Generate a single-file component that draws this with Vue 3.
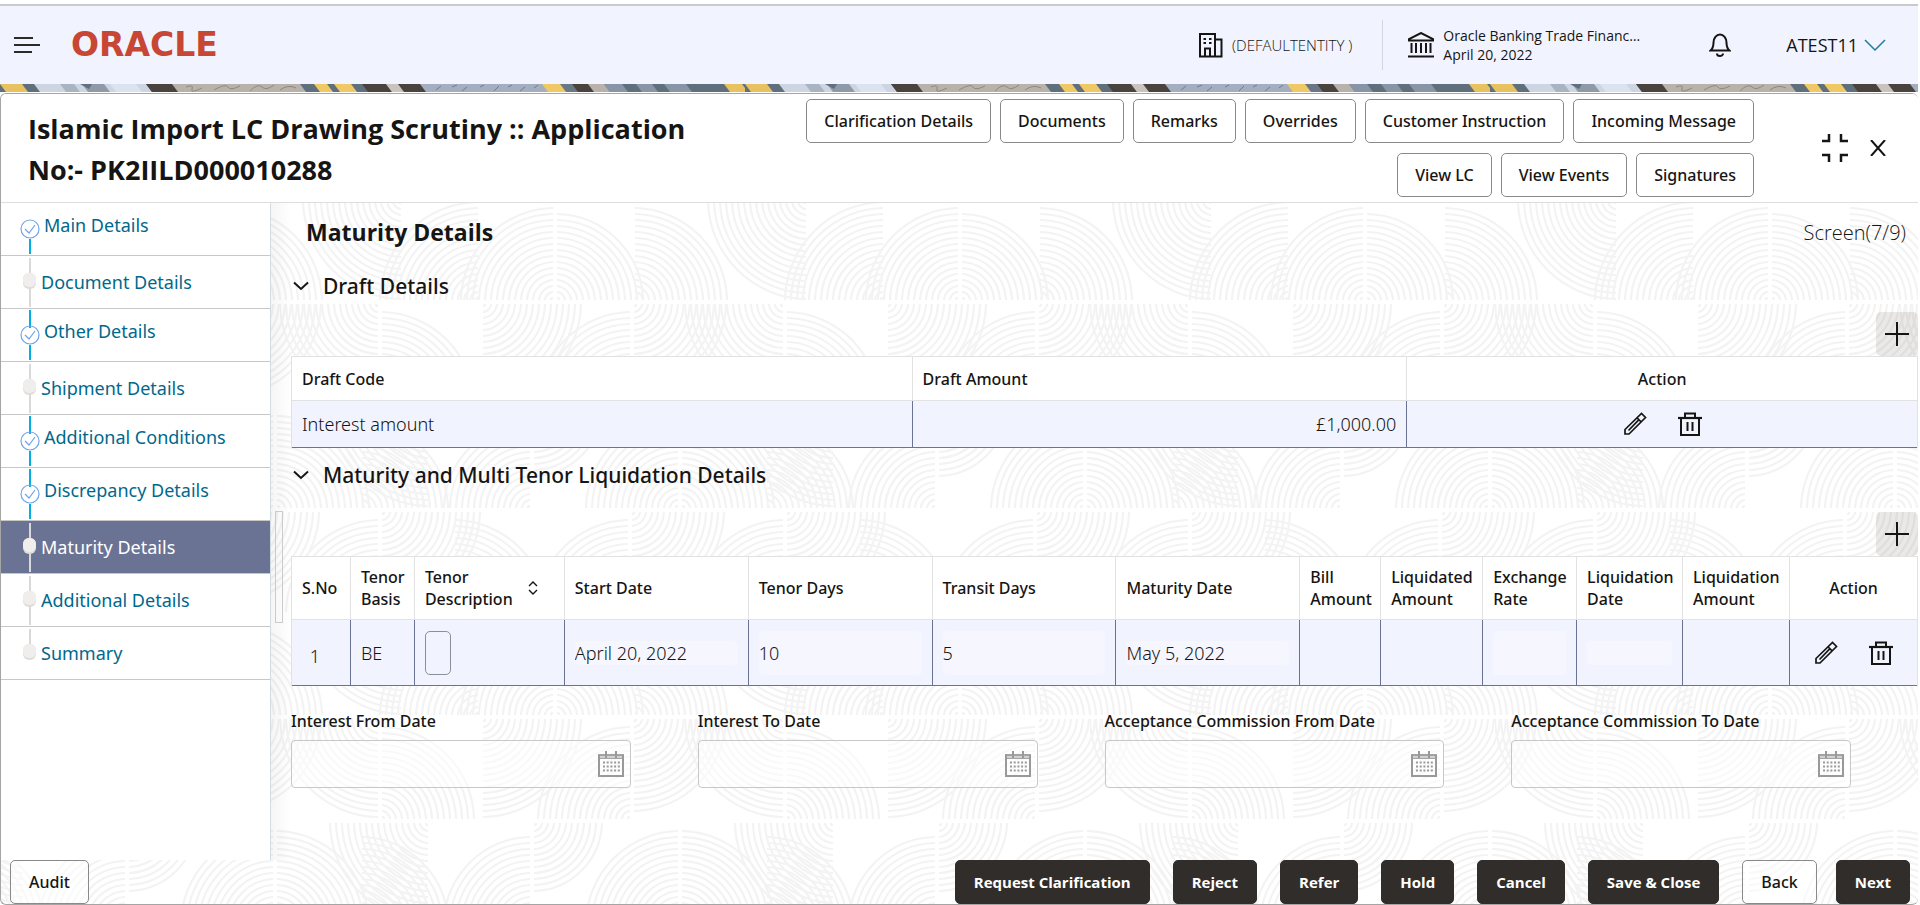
<script setup>
const topActions = [
  ['Clarification Details', 'Documents', 'Remarks', 'Overrides', 'Customer Instruction', 'Incoming Message'],
  ['View LC', 'View Events', 'Signatures'],
]

const steps = [
  { name: 'Main Details', done: true },
  { name: 'Document Details' },
  { name: 'Other Details', done: true },
  { name: 'Shipment Details' },
  { name: 'Additional Conditions', done: true },
  { name: 'Discrepancy Details', done: true },
  { name: 'Maturity Details', current: true },
  { name: 'Additional Details' },
  { name: 'Summary' },
]

const draftColumns = [621, 495, 510]
const tenorColumns = [59, 64, 150, 184, 184, 184, 184, 81, 102, 94, 106, 107, 127]
const share = (list, i) => (list[i] / list.reduce((a, b) => a + b, 0)) * 100 + '%'

const dateFields = [
  { id: 'interest-from', label: 'Interest From Date' },
  { id: 'interest-to', label: 'Interest To Date' },
  { id: 'commission-from', label: 'Acceptance Commission From Date' },
  { id: 'commission-to', label: 'Acceptance Commission To Date' },
]

const footerActions = ['Request Clarification', 'Reject', 'Refer', 'Hold', 'Cancel', 'Save & Close']

// Quarter fans of the backdrop: centre x, centre y, quadrant, outer radius
const fans = [
  [100, 0, 'bl', 100], [100, 104, 'tr', 98], [201, 0, 'br', 100], [352, 104, 'tl', 96], [352, 0, 'br', 98],
  [150, 104, 'bl', 100], [252, 208, 'tl', 90], [400, 208, 'tl', 98], [400, 208, 'tr', 98], [80, 208, 'tr', 90], [252, 104, 'br', 70],
  [100, 312, 'tl', 98], [100, 208, 'br', 100], [173, 312, 'tr', 94], [350, 312, 'tl', 98], [350, 208, 'br', 96],
  [200, 415, 'tl', 100], [275, 415, 'tl', 96], [275, 415, 'tr', 92], [353, 415, 'tr', 98], [123, 312, 'bl', 100],
]
const arc = ([cx, cy, quad], r) => {
  const sx = quad[1] === 'l' ? -1 : 1
  const sy = quad[0] === 't' ? -1 : 1
  return `M${cx + sx * r} ${cy + sy * 2}V${cy + sy * 3}A${r} ${r} 0 0 ${sx * sy > 0 ? 1 : 0} ${cx + sx * 3} ${cy + sy * r}H${cx + sx * 2}`
}
const fanPaths = fans.flatMap((f) => {
  const out = []
  for (let r = 4; r <= f[3]; r += 6) {
    const d = arc(f, r)
    out.push({ d, shift: 0 })
    if (f[0] + f[3] > 405) out.push({ d, shift: -405 })
    if (f[0] - f[3] < 0) out.push({ d, shift: 405 })
  }
  return out
})

// Banner mosaic: left edge, width, colour
const mosaic = [
  [0, 24, '#e9c260'], [22, 20, '#5f6f7b'], [34, 112, '#cdd5e3'], [60, 14, '#a9b4c2'], [82, 22, '#8f9aa8'], [110, 26, '#dbe2f0'],
  [146, 30, '#4a423d'], [172, 136, '#b9b2ab'], [300, 62, '#5f6f7b'], [314, 13, '#f0c964'], [334, 17, '#f0c964'],
  [362, 24, '#4a423d'], [386, 14, '#c9c4be'], [398, 24, '#4a423d'], [420, 126, '#a3afc0'], [542, 20, '#f0c964'],
  [560, 14, '#6a7885'], [572, 18, '#4a423d'], [588, 16, '#b9b2ab'], [604, 84, '#8795a6'], [622, 14, '#5f6f7b'], [652, 12, '#5f6f7b'],
  [686, 40, '#5f6f7b'], [724, 18, '#e9c260'],
]
</script>

<template>
  <div class="page">
    <svg class="defs" width="0" height="0" aria-hidden="true">
      <defs>
        <symbol id="pencil" viewBox="0 0 24 24">
          <path d="M2 22v-4.500L18.500 1.500l4 4L6 22zM14.200 6l3.700 3.700M5.500 18.500L15.500 8.200" fill="none" stroke="#161513" stroke-width="1.700" />
        </symbol>
        <symbol id="trash" viewBox="0 0 24 24">
          <path d="M0 6h24" stroke="#161513" stroke-width="2.200" />
          <path d="M7 5.500V1.500h10v4M3 6v17h18V6M9.500 10v9M14.500 10v9" fill="none" stroke="#161513" stroke-width="2" />
        </symbol>
        <symbol id="calendar" viewBox="0 0 26 26">
          <path d="M0 3h26v5H0z" fill="#a3a3a3" />
          <path d="M1 4v21h24V4" fill="none" stroke="#999" stroke-width="2" />
          <path d="M2 6h22" stroke="#fff" stroke-width="1" />
          <path d="M8 0v7M18 0v7" stroke="#999" stroke-width="2" />
          <path d="M5 11.500h17M5 15.500h17M5 19.500h17" stroke="#999" stroke-width="2" stroke-dasharray="2 1.700" />
        </symbol>
        <symbol id="chevron" viewBox="0 0 16 10">
          <path d="M1 1.500l7 6.500 7-6.500" fill="none" stroke="#161513" stroke-width="2" />
        </symbol>
      </defs>
    </svg>

    <header class="topbar">
      <button class="plain menu" aria-label="Menu">
        <svg width="26" height="16" viewBox="0 0 26 16"><path d="M0 1h19M0 8h26M0 15h18" stroke="#2b2a29" stroke-width="2" /></svg>
      </button>
      <span class="brand">ORACLE</span>
      <div class="entity">
        <svg width="24" height="25" viewBox="0 0 24 25">
          <path d="M1 1h15v22.500H1zM16 6.500h6.500v17H16" fill="none" stroke="#161513" stroke-width="2" />
          <path d="M4.500 6h2.500M10 6h2.500M4.500 10h2.500M10 10h2.500" stroke="#161513" stroke-width="2.200" />
          <path d="M6 23v-7.500h5V23" fill="none" stroke="#161513" stroke-width="2" />
        </svg>
        <span>(DEFAULTENTITY )</span>
      </div>
      <div class="branch">
        <svg width="26" height="26" viewBox="0 0 26 26">
          <path d="M1 8.500v-1.500L13 1l12 6v1.500z" fill="none" stroke="#161513" stroke-width="2" />
          <path d="M3.500 11v10M8 11v10M13 11v10M18 11v10M22.500 11v10" stroke="#161513" stroke-width="2" />
          <path d="M0 24.500h26" stroke="#161513" stroke-width="2" />
        </svg>
        <div class="branch-text">
          <div class="branch-name">Oracle Banking Trade Financ…</div>
          <div>April 20, 2022</div>
        </div>
      </div>
      <button class="plain bell" aria-label="Notifications">
        <svg width="22" height="24" viewBox="0 0 22 24">
          <path d="M1.500 17.500c2.500-2 3-4 3-8a6.500 8 0 0 1 13 0c0 4 .5 6 3 8z" fill="none" stroke="#161513" stroke-width="2" />
          <path d="M8 20.500a3 2.500 0 0 0 6 0" fill="none" stroke="#161513" stroke-width="2" />
        </svg>
      </button>
      <button class="plain user">
        ATEST11
        <svg width="22" height="12" viewBox="0 0 22 12"><path d="M1 1l10 10L21 1" fill="none" stroke="#227e9e" stroke-width="1.500" /></svg>
      </button>
    </header>

    <svg class="mosaic" width="100%" height="8" aria-hidden="true">
      <defs>
        <pattern id="mosaic" width="745" height="8" patternUnits="userSpaceOnUse">
          <rect width="745" height="8" fill="#5f6f7b" />
          <path v-for="(m, i) in mosaic" :key="i" :d="`M${m[0]} 0h${m[1]}l6 8h-${m[1]}z`" :fill="m[2]" />
          <path d="M80 0h12l-3 5z" fill="#5f6f7b" />
          <path d="M186 3q8-3 6 2t10-1M214 6q12-7 14-3t12-1M250 7q8-8 12-4t12-2M280 6q8-6 16-2" fill="none" stroke="#8d8781" />
          <path d="M436 6l5-4M452 3l5-2M462 7l5-4M480 3l4-2M494 7l5-5M508 3l4-2M520 7l5-4M534 4l4-3" stroke="#6f7c8e" />
        </pattern>
      </defs>
      <rect width="100%" height="8" fill="url(#mosaic)" />
    </svg>

    <main class="panel">
      <svg class="backdrop" width="100%" height="100%" aria-hidden="true">
        <defs>
          <pattern id="fans" x="279" y="208" width="405" height="415" patternUnits="userSpaceOnUse">
            <path v-for="(p, i) in fanPaths" :key="i" :d="p.d" :transform="`translate(${p.shift} 0)`" fill="none" stroke="#f3f3f3" stroke-width="2.200" />
          </pattern>
        </defs>
        <rect width="100%" height="100%" fill="url(#fans)" />
      </svg>

      <div class="titlebar">
        <h1>Islamic Import LC Drawing Scrutiny :: Application No:- PK2IILD000010288</h1>
        <div class="actions">
          <div v-for="(row, i) in topActions" :key="i" class="action-row">
            <button v-for="a in row" :key="a" class="btn">{{ a }}</button>
          </div>
        </div>
        <div class="window-tools">
          <button class="plain" aria-label="Collapse">
            <svg width="26" height="28" viewBox="0 0 26 28"><path d="M0 7h7V0M26 7h-7V0M0 21h7v7M26 21h-7v7" fill="none" stroke="#161513" stroke-width="2.500" /></svg>
          </button>
          <button class="plain" aria-label="Close">
            <svg width="16" height="16" viewBox="0 0 16 16"><path d="M1 0l14 16M15 0L1 16" stroke="#161513" stroke-width="2" /></svg>
          </button>
        </div>
      </div>

      <div class="body">
        <nav class="steps">
          <a v-for="(s, i) in steps" :key="s.name" href="#" class="step" :class="{ done: s.done, current: s.current }">
            <svg width="20" height="52" viewBox="0 0 20 52">
              <template v-if="s.done">
                <path v-if="i > 0" d="M10 1v18" stroke="#00afe3" stroke-width="2" />
                <path d="M10 36v15" stroke="#00afe3" stroke-width="2" />
                <circle cx="10" cy="26" r="9" fill="none" stroke="#6ea6e6" stroke-width="1.200" />
                <path d="M5 26l4 4 6-8" fill="none" stroke="#6ea6e6" stroke-width="1.200" />
              </template>
              <template v-else>
                <path :d="i < steps.length - 1 ? 'M10 2v49' : 'M10 2v22'" stroke="#d9d9dc" stroke-width="2" />
                <rect x="3" y="17" width="13" height="16" rx="6" fill="#dedddb" />
                <rect x="3" y="17" width="13" height="14" rx="6" fill="#efeeec" />
              </template>
            </svg>
            <span>{{ s.name }}</span>
          </a>
        </nav>

        <section class="content">
          <div class="splitter"></div>
          <div class="page-head">
            <h2>Maturity Details</h2>
            <span>Screen(7/9)</span>
          </div>

          <h3><svg width="16" height="10"><use href="#chevron" /></svg>Draft Details</h3>
          <div class="toolbar">
            <button class="plain add" aria-label="Add draft">
              <svg width="24" height="24" viewBox="0 0 24 24"><path d="M12 0v24M0 12h24" stroke="#161513" stroke-width="2" /></svg>
            </button>
          </div>
          <table class="draft">
            <colgroup><col v-for="(w, i) in draftColumns" :key="i" :style="{ width: share(draftColumns, i) }" /></colgroup>
            <thead>
              <tr><th>Draft Code</th><th>Draft Amount</th><th class="center">Action</th></tr>
            </thead>
            <tbody>
              <tr>
                <td>Interest amount</td>
                <td class="right">£1,000.00</td>
                <td>
                  <div class="row-icons">
                    <button class="plain" aria-label="Edit"><svg width="24" height="24"><use href="#pencil" /></svg></button>
                    <button class="plain" aria-label="Delete"><svg width="24" height="24"><use href="#trash" /></svg></button>
                  </div>
                </td>
              </tr>
            </tbody>
          </table>

          <h3><svg width="16" height="10"><use href="#chevron" /></svg>Maturity and Multi Tenor Liquidation Details</h3>
          <div class="toolbar">
            <button class="plain add" aria-label="Add tenor">
              <svg width="24" height="24" viewBox="0 0 24 24"><path d="M12 0v24M0 12h24" stroke="#161513" stroke-width="2" /></svg>
            </button>
          </div>
          <table class="tenor">
            <colgroup><col v-for="(w, i) in tenorColumns" :key="i" :style="{ width: share(tenorColumns, i) }" /></colgroup>
            <thead>
              <tr>
                <th>S.No</th>
                <th>Tenor<br />Basis</th>
                <th>
                  <div class="sortable">
                    <span>Tenor<br />Description</span>
                    <svg width="10" height="14" viewBox="0 0 10 14"><path d="M1 5l4-4 4 4M1 9l4 4 4-4" fill="none" stroke="#161513" stroke-width="1.400" /></svg>
                  </div>
                </th>
                <th>Start Date</th>
                <th>Tenor Days</th>
                <th>Transit Days</th>
                <th>Maturity Date</th>
                <th>Bill<br />Amount</th>
                <th>Liquidated<br />Amount</th>
                <th>Exchange<br />Rate</th>
                <th>Liquidation<br />Date</th>
                <th>Liquidation<br />Amount</th>
                <th class="center">Action</th>
              </tr>
            </thead>
            <tbody>
              <tr>
                <td class="center serial">1</td>
                <td>BE</td>
                <td><button class="blank" aria-label="Tenor description"></button></td>
                <td><input class="short" readonly aria-label="Start date" value="April 20, 2022" /></td>
                <td><input readonly aria-label="Tenor days" value="10" /></td>
                <td><input readonly aria-label="Transit days" value="5" /></td>
                <td><input class="short" readonly aria-label="Maturity date" value="May 5, 2022" /></td>
                <td></td>
                <td></td>
                <td><input readonly aria-label="Exchange rate" /></td>
                <td><input class="short" readonly aria-label="Liquidation date" /></td>
                <td></td>
                <td>
                  <div class="row-icons">
                    <button class="plain" aria-label="Edit"><svg width="24" height="24"><use href="#pencil" /></svg></button>
                    <button class="plain" aria-label="Delete"><svg width="24" height="24"><use href="#trash" /></svg></button>
                  </div>
                </td>
              </tr>
            </tbody>
          </table>

          <div class="fields">
            <div v-for="f in dateFields" :key="f.id" class="field">
              <label :for="f.id">{{ f.label }}</label>
              <div class="date-box">
                <input :id="f.id" />
                <svg width="26" height="26"><use href="#calendar" /></svg>
              </div>
            </div>
          </div>
        </section>
      </div>

      <footer class="footer">
        <button class="btn">Audit</button>
        <div class="footer-actions">
          <button v-for="a in footerActions" :key="a" class="btn dark">{{ a }}</button>
          <button class="btn">Back</button>
          <button class="btn dark next">Next</button>
        </div>
      </footer>
    </main>
  </div>
</template>

<style>
body {
  margin: 0;
  background: #fff;
}
</style>

<style scoped>
* {
  box-sizing: border-box;
}
.page {
  display: flex;
  flex-direction: column;
  min-height: 100vh;
  padding: 4px 2px 0 0;
  font-family: "Open Sans", "Noto Sans", sans-serif;
  font-size: 16px;
  color: #161513;
}
.defs {
  position: absolute;
}
svg {
  display: block;
  flex: none;
}
.plain {
  padding: 0;
  border: 0;
  background: none;
  font: inherit;
  color: inherit;
}
.topbar {
  display: flex;
  align-items: center;
  height: 80px;
  padding: 0 32px 0 14px;
  border-top: 2px solid #cacaca;
  background: #f1f4fe;
  font-size: 14px;
}
.brand {
  margin-left: 31px;
  font: bold 33px/40px "DejaVu Sans", sans-serif;
  color: #c74634;
}
.entity {
  display: flex;
  align-items: center;
  gap: 9px;
  height: 50px;
  margin-left: auto;
  padding-right: 30px;
  border-right: 1px solid #d2d6e2;
  font-size: 15px;
  font-weight: 300;
}
.branch {
  display: flex;
  align-items: center;
  gap: 9px;
  margin-left: 25px;
}
.branch-text {
  width: 204px;
  line-height: 19px;
}
.branch-name {
  overflow: hidden;
  white-space: nowrap;
}
.bell {
  margin-left: 62px;
}
.user {
  display: flex;
  align-items: center;
  gap: 6px;
  margin-left: 55px;
  font-size: 18px;
}
.mosaic {
  height: 8px;
}
.panel {
  position: relative;
  display: flex;
  flex: 1;
  flex-direction: column;
  margin-top: 1px;
  border: 1px solid #a5a5a5;
  border-right: 0;
  border-radius: 6px;
  overflow: hidden;
}
.backdrop {
  position: absolute;
  inset: 0;
  z-index: -1;
}
.titlebar {
  display: flex;
  align-items: center;
  height: 109px;
  padding-left: 27px;
  border-bottom: 1px solid #dedede;
  background: #fff;
}
h1 {
  flex: 1;
  margin: 0;
  padding-top: 2px;
  max-width: 700px;
  font-size: 27px;
  line-height: 41px;
  font-weight: 700;
}
.actions {
  display: flex;
  flex-direction: column;
  gap: 10px;
  margin-left: auto;
}
.action-row {
  display: flex;
  justify-content: flex-end;
  gap: 9px;
}
.btn {
  height: 44px;
  padding: 0 18px;
  border: 1px solid #8a8988;
  border-radius: 5px;
  background: #fff;
  font: 500 16px/22px "Noto Sans", "Open Sans", sans-serif;
  color: #161513;
  white-space: nowrap;
}
.actions .btn {
  padding: 0 17px;
}
.btn.dark {
  border-color: #312d2a;
  background: #312d2a;
  color: #fff;
  font: 700 15px/22px "Open Sans", "Noto Sans", sans-serif;
}
.window-tools {
  display: flex;
  align-items: center;
  gap: 22px;
  margin: 0 32px 0 68px;
}
.body {
  display: flex;
  flex: 1;
}
.steps {
  width: 270px;
  flex: none;
  border-right: 1px solid #d3dbe4;
  background: #fff;
}
.step {
  display: flex;
  gap: 1px;
  height: 53px;
  padding-left: 19px;
  border-bottom: 1px solid #c9c7c5;
  color: #00688c;
  font: 400 18px/52px "Noto Sans", "Open Sans", sans-serif;
  text-decoration: none;
}
.step.done {
  gap: 4px;
  line-height: 44px;
}
.step.current {
  background: #6b7394;
  color: #fff;
}
.content {
  position: relative;
  flex: 1;
  min-width: 0;
  padding-left: 20px;
  background: linear-gradient(90deg, rgba(0, 0, 0, 0.04), rgba(0, 0, 0, 0) 20px);
}
.splitter {
  position: absolute;
  top: 308px;
  left: 4px;
  width: 8px;
  height: 112px;
  border: 1px solid #cbcbcb;
}
.page-head {
  display: flex;
  align-items: center;
  justify-content: space-between;
  height: 58px;
  padding: 0 12px 0 15px;
  font-size: 20px;
  font-weight: 300;
}
h2 {
  margin: 0;
  font-size: 23px;
  font-weight: 700;
}
h3 {
  display: flex;
  align-items: center;
  gap: 14px;
  height: 49px;
  margin: 0;
  padding-left: 2px;
  font: 500 21px/28px "Noto Sans", "Open Sans", sans-serif;
}
.toolbar {
  display: flex;
  justify-content: flex-end;
  height: 46px;
  padding-top: 2px;
}
.draft + h3 {
  height: 54px;
}
.draft ~ .toolbar {
  height: 54px;
  padding-top: 10px;
}
.add {
  display: grid;
  place-items: center;
  width: 42px;
  height: 44px;
  border-radius: 5px;
  background: rgba(80, 75, 65, 0.12);
}
table {
  width: 100%;
  border-collapse: separate;
  border-spacing: 0;
  table-layout: fixed;
  border: 1px solid #e2e2e2;
  border-bottom: 0;
}
th {
  padding: 0 0 0 10px;
  border-right: 1px solid #e2e2e2;
  border-bottom: 1px solid #e2e2e2;
  background: #fff;
  font: 500 16px/22px "Noto Sans", "Open Sans", sans-serif;
  text-align: left;
}
td {
  padding: 0 10px;
  border-right: 1px solid #6b7394;
  border-bottom: 1px solid #6b7394;
  background: #f1f4fe;
  font: 300 18px/24px "Noto Sans", "Open Sans", sans-serif;
}
th:last-child,
td:last-child {
  border-right: 0;
}
.center {
  padding: 0;
  text-align: center;
}
.right {
  text-align: right;
}
.draft th {
  height: 44px;
}
.draft td {
  height: 47px;
}
.tenor th {
  height: 63px;
}
.tenor td {
  height: 66px;
}
.serial {
  padding: 6px 12px 0 0;
}
.sortable {
  display: flex;
  align-items: center;
  justify-content: space-between;
  padding-right: 26px;
}
.tenor input {
  display: block;
  width: 100%;
  height: 44px;
  padding: 0;
  border: 0;
  border-radius: 4px;
  background: #f5f6fe;
  font: inherit;
  color: inherit;
}
.tenor input.short {
  height: 24px;
}
.blank {
  display: block;
  width: 26px;
  height: 44px;
  border: 1px solid #8a8f9c;
  border-radius: 5px;
  background: none;
}
.row-icons {
  display: flex;
  justify-content: center;
  gap: 31px;
}
.fields {
  display: grid;
  grid-template-columns: repeat(4, 1fr);
  margin-top: 24px;
}
.field {
  padding-right: 67px;
}
.field label {
  display: block;
  height: 30px;
  font: 500 16px/22px "Noto Sans", "Open Sans", sans-serif;
}
.date-box {
  display: flex;
  align-items: center;
  height: 48px;
  padding: 0 6px;
  border: 1px solid #c8c8c8;
  border-radius: 4px;
  background: rgba(255, 255, 255, 0.5);
}
.date-box input {
  flex: 1;
  min-width: 0;
  height: 40px;
  padding: 0;
  border: 0;
  outline: 0;
  background: none;
  font: inherit;
}
.footer {
  display: flex;
  justify-content: space-between;
  height: 44px;
  padding: 0 8px 0 9px;
}
.footer .btn:not(.dark) {
  background: rgba(255, 255, 255, 0.5);
}
.footer-actions {
  display: flex;
  gap: 23px;
}
.footer-actions .next {
  margin-left: -4px;
}
</style>
